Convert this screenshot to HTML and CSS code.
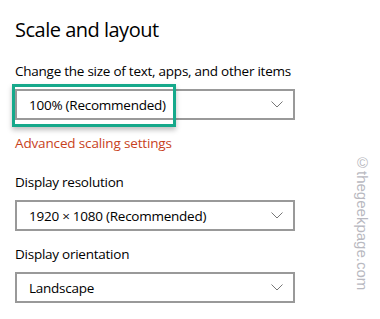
FILE: index.html
```html
<!DOCTYPE html>
<html lang="en">

<head>
    <meta charset="UTF-8">
    <title>Scale and layout</title>
    <meta name="viewport" content="width=device-width, initial-scale=1.0">
    <link rel="stylesheet" href="styles.css">
</head>

<body>
    <div class="settings">
        <h2 class="section-title">Scale and layout</h2>

        <div class="field field-scale">
            <label class="field-label">Change the size of text, apps, and other items</label>
            <div class="select-wrap">
                <div class="select">
                    <span>100% (Recommended)</span>
                    <svg class="chevron" width="12" height="7" viewBox="0 0 12 7"><path d="M0.5 0.5 L6 6 L11.5 0.5" fill="none" stroke="#777" stroke-width="1"/></svg>
                </div>
                <div class="highlight"></div>
            </div>
            <a class="link" href="#">Advanced scaling settings</a>
        </div>

        <div class="field">
            <label class="field-label">Display resolution</label>
            <div class="select">
                <span>1920 × 1080 (Recommended)</span>
                <svg class="chevron" width="12" height="7" viewBox="0 0 12 7"><path d="M0.5 0.5 L6 6 L11.5 0.5" fill="none" stroke="#777" stroke-width="1"/></svg>
            </div>
        </div>

        <div class="field">
            <label class="field-label">Display orientation</label>
            <div class="select">
                <span>Landscape</span>
                <svg class="chevron" width="12" height="7" viewBox="0 0 12 7"><path d="M0.5 0.5 L6 6 L11.5 0.5" fill="none" stroke="#777" stroke-width="1"/></svg>
            </div>
        </div>
    </div>
    <div class="watermark">©thegeekpage.com</div>
</body>

</html>
```

FILE: styles.css
```css
html,
body {
    margin: 0;
    padding: 0;
}

body {
    width: 380px;
    height: 319px;
    background: #fff;
    font-family: 'Open Sans', 'Noto Sans', Arial, sans-serif;
    color: #000;
    position: relative;
    overflow: hidden;
}

.settings {
    padding: 17px 0 0 15px;
    width: 280px;
}

.section-title {
    margin: 0 0 19px 0;
    font-size: 20px;
    font-weight: 400;
    line-height: 26px;
    letter-spacing: -0.5px;
}

.field {
    margin-bottom: 14px;
}

.field-scale {
    margin-bottom: 21px;
}

.field-label {
    display: block;
    font-size: 13.5px;
    line-height: 18px;
    margin-bottom: 9px;
    white-space: nowrap;
    letter-spacing: -0.25px;
}

.select-wrap {
    position: relative;
}

.select {
    height: 27px;
    border: 2px solid #999;
    display: flex;
    align-items: center;
    justify-content: space-between;
    padding: 0 10px 0 12px;
    font-size: 13.5px;
    letter-spacing: -0.25px;
}

.chevron {
    display: block;
}

.highlight {
    position: absolute;
    left: -3px;
    top: -5px;
    width: 158px;
    height: 37px;
    border: 3px solid #16a98b;
    box-shadow: 0 3px 5px rgba(0, 0, 0, 0.25);
}

.link {
    display: block;
    margin-top: 14px;
    color: #c8421c;
    font-size: 13.5px;
    line-height: 18px;
    text-decoration: none;
    letter-spacing: -0.15px;
}

.watermark {
    position: absolute;
    left: 354px;
    top: 154px;
    writing-mode: vertical-rl;
    font-family: 'Liberation Sans', Arial, sans-serif;
    font-size: 15px;
    color: #b8b8c0;
}
```
